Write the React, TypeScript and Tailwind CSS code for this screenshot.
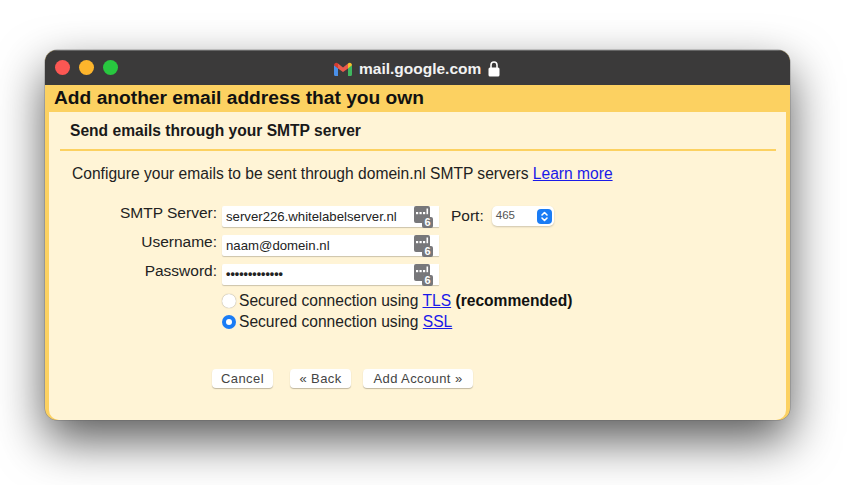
function PasswordKeyIcon() {
  return (
    <svg width="19" height="22" viewBox="0 0 19 22" className="shrink-0 overflow-visible">
      <path d="M2 0h12a2 2 0 0 1 2 2v9h-5a2 2 0 0 0-2 2v4H2a2 2 0 0 1-2-2V2a2 2 0 0 1 2-2z" fill="#77777a" />
      <rect x="2" y="6" width="2.2" height="2.2" fill="#fff" />
      <rect x="5.5" y="6" width="2.2" height="2.2" fill="#fff" />
      <rect x="9" y="6" width="2.2" height="2.2" fill="#fff" />
      <rect x="12.5" y="2.5" width="1.6" height="5.7" fill="#fff" />
      <rect x="8" y="11" width="11" height="11" rx="2" fill="#77777a" />
      <text x="13.5" y="20.3" textAnchor="middle" fontSize="11" fontWeight="700" fill="#fff" fontFamily="Liberation Sans">6</text>
    </svg>
  );
}

function GmailIcon() {
  return (
    <svg width="18" height="14" viewBox="0 0 18 14">
      <path d="M0 3v9.5A1.5 1.5 0 0 0 1.5 14H4V6z" fill="#4a90e8" />
      <path d="M18 3v9.5a1.5 1.5 0 0 1-1.5 1.5H14V6z" fill="#3fb65f" />
      <path d="M4 6.5 9 10l5-3.5V1.5L9 5.5 4 1.5z" fill="#ea5a4c" />
      <path d="M0 3.2C0 1 2.5-.3 4 1.5v5L0 3.2z" fill="#d43c30" />
      <path d="M18 3.2C18 1 15.5-.3 14 1.5v5l4-3.3z" fill="#f6c02c" />
    </svg>
  );
}

function LockIcon() {
  return (
    <svg width="12" height="16" viewBox="0 0 12 16">
      <path d="M3 7V4a3 3 0 0 1 6 0v3" fill="none" stroke="#fff" strokeWidth="1.6" />
      <rect x="0.5" y="6.5" width="11" height="9" rx="1.5" fill="#fff" />
    </svg>
  );
}

function Field({ label, value, dots }: { label: string; value: string; dots?: boolean }) {
  return (
    <div className="flex items-start h-[29px]">
      <span className="w-[162px] -mt-[1px] text-right text-[15.5px] leading-[17px] text-[#222] pr-[5px] shrink-0">{label}</span>
      <div className="w-[217px] h-[21px] mt-[1px] bg-white rounded-l-[2px] shadow-[0_1px_1px_rgba(0,0,0,0.2)] flex items-start justify-between pl-[4px] pr-[6px] shrink-0">
        <span className={dots ? "text-[12.5px] leading-[21px] font-bold text-[#222]" : "text-[13.2px] leading-[21px] text-[#222]"}>{value}</span>
        <PasswordKeyIcon />
      </div>
    </div>
  );
}

function Btn({ children, w }: { children: string; w: string }) {
  return (
    <button className={`${w} h-[19px] bg-white rounded-[4px] shadow-[0_1px_1px_rgba(0,0,0,0.25)] text-[13px] leading-[19px] tracking-[0.4px] text-[#444]`}>
      {children}
    </button>
  );
}

export default function App() {
  return (
    <div className="w-[857px] h-[485px] overflow-hidden bg-white pl-[45px] pt-[50px] font-['Liberation_Sans',Arial,sans-serif]">
      <div className="w-[745px] h-[370px] rounded-[12px] overflow-hidden flex flex-col bg-[#fcd161] shadow-[0_0_0_0.5px_rgba(90,90,90,0.5),0_20px_48px_rgba(0,0,0,0.66)]">
        {/* title bar */}
        <div className="h-[35px] bg-[#3b3a3a] border-t border-[#666] flex items-center shrink-0 relative">
          <div className="flex gap-[9px] pl-[10px] -mt-[1px]">
            <div className="w-[15px] h-[15px] rounded-full bg-[#fc5753]" />
            <div className="w-[15px] h-[15px] rounded-full bg-[#fdb52c]" />
            <div className="w-[15px] h-[15px] rounded-full bg-[#28c73f]" />
          </div>
          <div className="absolute left-[289px] top-[9px] flex items-center gap-[7px]">
            <GmailIcon />
            <span className="text-[15.5px] leading-[17px] font-bold text-[#f2f2f2]">mail.google.com</span>
            <LockIcon />
          </div>
        </div>

        {/* heading */}
        <div className="h-[27px] pl-[9px] shrink-0 text-[19.2px] leading-[25px] font-bold text-[#111]">
          Add another email address that you own
        </div>

        {/* content */}
        <div className="flex-1 mx-[4px] bg-[#fff4d6] rounded-b-[10px] pl-[11px] pr-[10px] flex flex-col">
          <div className="pl-[10px] pt-[10px] h-[39px] border-b-2 border-[#fcd161] text-[15.6px] leading-[18px] font-bold text-[#1a1a1a] shrink-0">
            Send emails through your SMTP server
          </div>
          <p className="pl-[12px] mt-[13px] text-[15.6px] leading-[19px] text-[#222]">
            Configure your emails to be sent through domein.nl SMTP servers{" "}
            <a className="text-[#1a1ae8] underline">Learn more</a>
          </p>

          <div className="relative mt-[22px]">
            <Field label="SMTP Server:" value="server226.whitelabelserver.nl" />
            <Field label="Username:" value="naam@domein.nl" />
            <Field label="Password:" value="•••••••••••••" dots />
            {/* port select sits beside the first row */}
            <div className="absolute left-[391px] top-0 flex items-start">
              <span className="text-[15.5px] leading-[21px] text-[#222]">Port:</span>
              <div className="ml-[8px] mt-[1px] w-[62px] h-[20px] bg-white rounded-[5px] shadow-[0_1px_2px_rgba(0,0,0,0.2)] flex items-center justify-between pl-[4px] pr-[2px]">
                <span className="text-[11.5px] text-[#555]">465</span>
                <div className="w-[15px] h-[15px] rounded-[4px] bg-[#1a7cf5] flex items-center justify-center">
                  <svg width="9" height="13" viewBox="0 0 9 13" fill="none" stroke="#fff" strokeWidth="1.6" strokeLinecap="round" strokeLinejoin="round">
                    <path d="M2 5 4.5 2.5 7 5M2 8l2.5 2.5L7 8" />
                  </svg>
                </div>
              </div>
            </div>
          </div>

          <div className="pl-[162px] -mt-[2px] flex flex-col text-[15.6px] leading-[21px] text-[#222]">
            <div className="flex items-center gap-[3px]">
              <div className="w-[14px] h-[14px] rounded-full bg-white shadow-[0_0_1px_rgba(0,0,0,0.5)] shrink-0" />
              <span>
                Secured connection using <a className="text-[#1a1ae8] underline">TLS</a> <b className="text-[#111]">(recommended)</b>
              </span>
            </div>
            <div className="flex items-center gap-[3px]">
              <div className="w-[14px] h-[14px] rounded-full bg-[#1a7cf5] flex items-center justify-center shrink-0">
                <div className="w-[6px] h-[6px] rounded-full bg-white" />
              </div>
              <span>
                Secured connection using <a className="text-[#1a1ae8] underline">SSL</a>
              </span>
            </div>
          </div>

          <div className="pl-[152px] mt-[37px] flex gap-[17px]">
            <Btn w="w-[61px]">Cancel</Btn>
            <Btn w="w-[61px]">« Back</Btn>
            <Btn w="w-[110px] -ml-[5px]">Add Account »</Btn>
          </div>
        </div>
      </div>
    </div>
  );
}
